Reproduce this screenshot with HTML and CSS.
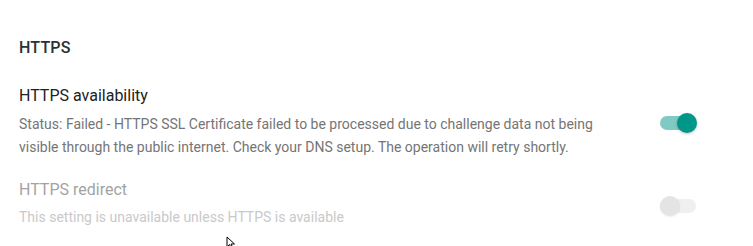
FILE: index.html
```html
<!DOCTYPE html>
<html>
<head>
<meta charset="utf-8">
<link rel="stylesheet" href="styles.css">
</head>
<body>
<section class="card">
  <h2 class="heading">HTTPS</h2>
  <div class="row">
    <div class="text">
      <div class="title">HTTPS availability</div>
      <div class="desc">Status: Failed - HTTPS SSL Certificate failed to be processed due to challenge data not being visible through the public internet. Check your DNS setup. The operation will retry shortly.</div>
    </div>
    <div class="switch on"><span class="track"></span><span class="knob"></span></div>
  </div>
  <div class="row disabled">
    <div class="text">
      <div class="title">HTTPS redirect</div>
      <div class="desc">This setting is unavailable unless HTTPS is available</div>
    </div>
    <div class="switch off"><span class="track"></span><span class="knob"></span></div>
  </div>
</section>
<svg class="cursor" width="12" height="14" viewBox="0 0 12 14"><path d="M1 1 L1 11 L3.5 8.5 L5.5 13 L7 12.3 L5 8 L8.5 8 Z" fill="#fff" stroke="#000" stroke-width="1"/></svg>
</body>
</html>
```
FILE: styles.css
```css
html, body { margin: 0; padding: 0; background: #fff; }
body { font-family: Roboto, "Noto Sans", sans-serif; width: 753px; height: 246px; overflow: hidden; position: relative; }
.card { padding: 38px 56px 0 19px; }
.heading { margin: 0 0 28px; font-size: 16px; font-weight: 500; line-height: 20px; color: #263238; letter-spacing: 0.2px; }
.row { display: flex; align-items: flex-start; justify-content: space-between; }
.row + .row { margin-top: 21px; }
.text { width: 610px; }
.title { font-size: 16px; line-height: 20px; color: #212121; }
.desc { margin-top: 7px; font-size: 14px; line-height: 23px; color: #757575; }
.row.disabled .title { color: #a3a3a3; }
.row.disabled .desc { color: #c9c9c9; margin-top: 6px; }
.switch { position: relative; width: 37px; height: 20px; margin-top: 27px; }
.track { position: absolute; left: 0; top: 3px; width: 36px; height: 14px; border-radius: 7px; }
.knob { position: absolute; top: 0; width: 20px; height: 20px; border-radius: 50%; }
.on .track { background: #7fcbc3; }
.on .knob { right: 0; background: #009688; box-shadow: 0 1px 3px rgba(0,0,0,0.25); }
.off .track { background: #efefef; }
.off .knob { left: 0; background: #e4e4e4; box-shadow: 0 1px 2px rgba(0,0,0,0.08); }
.row.disabled .switch { margin-top: 16px; }
.cursor { position: absolute; left: 226px; top: 236px; }
```
